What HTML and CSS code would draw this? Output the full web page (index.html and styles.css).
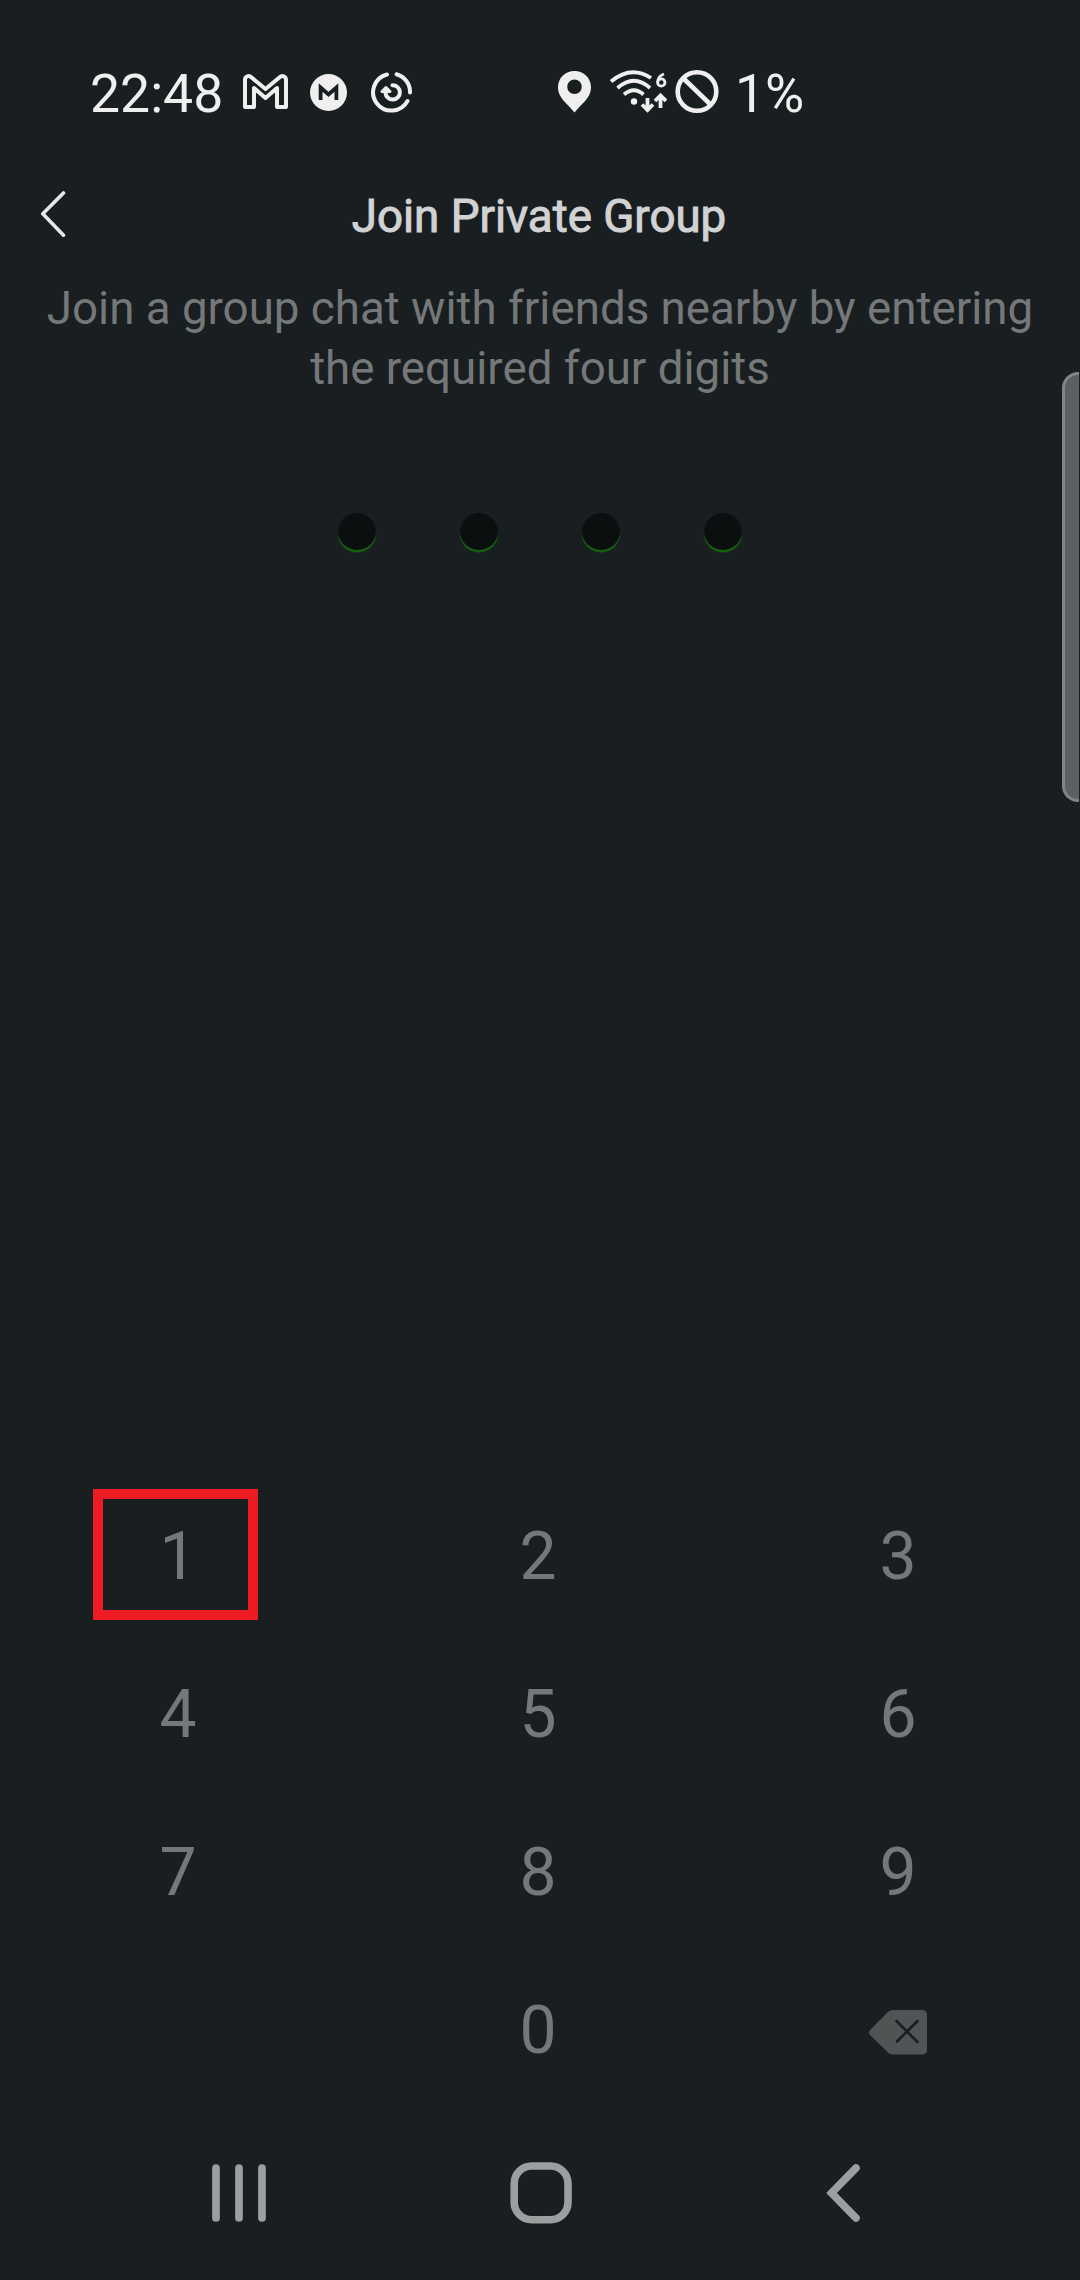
FILE: index.html
```html
<!DOCTYPE html>
<html lang="en">
<head>
<meta charset="utf-8">
<title>Join Private Group</title>
<link rel="stylesheet" href="styles.css">
</head>
<body>
<div class="screen">
  <div class="status">
    <span class="time">22:48</span>
    <svg class="gmail" width="49" height="68" viewBox="241 60 49 68" fill="none" stroke="#efefef" stroke-width="4" stroke-linejoin="round"><path d="M245 80C245 76 249 75 251 77L265.500 89L280 77C282 75 286 76 286 80V107H277V88L265.500 98L254 88V107H245Z"/></svg>
    <svg class="mega" width="37" height="68" viewBox="310 60 37 68"><circle cx="328.500" cy="92.500" r="18.500" fill="#efefef"/><path d="M320.600 100V87.500L328.500 94.500L336.400 87.500V100" fill="none" stroke="#191e20" stroke-width="3.800"/></svg>
    <svg class="sync" width="43" height="68" viewBox="370 60 43 68" fill="none" stroke="#efefef" stroke-width="4" stroke-linecap="round" stroke-linejoin="round"><path d="M387 74.500A18.300 18.300 0 1 0 407.500 101"/><path d="M396.500 74.300A18.300 18.300 0 0 1 410 92.500"/><path d="M392.500 85.200A7.200 7.200 0 1 1 385.500 93"/><path d="M382 91.500L386 87.500L390 91.500Z" stroke-width="3" fill="#efefef"/></svg>
    <svg class="pin" width="33" height="68" viewBox="558 60 33 68"><path fill="#efefef" fill-rule="evenodd" d="M574.500 71C565 71 558 78 558 87.500C558 98 567 103 574.500 112.500C582 103 591 98 591 87.500C591 78 584 71 574.500 71ZM574.500 79.500A7.200 7.200 0 1 1 574.500 94A7.200 7.200 0 1 1 574.500 79.500Z"/></svg>
    <svg class="wifi" width="58" height="68" viewBox="609 60 58 68" fill="none" stroke="#efefef" stroke-width="3.800"><path d="M611 81.500Q631 65 651 78"/><path d="M617.500 88Q634 73.500 650 88"/><path d="M624 94.500Q634 86 643.500 94.500"/><circle cx="634" cy="101.500" r="3.200" fill="#efefef" stroke="none"/><path d="M647.500 98V110M642 104.500L647.500 110L653 104.500M660.500 108V95.500M655 101L660.500 95.500L666 101"/><path d="M664 74Q658 76 657.700 82" stroke-width="2.800"/><circle cx="661.300" cy="82.500" r="3.700" stroke-width="2.800"/></svg>
    <svg class="block" width="44" height="68" viewBox="675 60 44 68" fill="none" stroke="#efefef" stroke-width="4.600"><circle cx="697" cy="91.500" r="19.300"/><path d="M683 78L711 105"/></svg>
    <span class="battery">1%</span>
  </div>
  <header class="header">
    <svg class="back" width="27" height="121" viewBox="39 156 27 121" fill="none" stroke="#e6e7e7" stroke-width="3.600" stroke-linecap="round" stroke-linejoin="round"><path d="M63.500 193L42.800 213.700L63.500 235.200"/></svg>
    <h1 class="title">Join Private Group</h1>
  </header>
  <p class="hint">Join a group chat with friends nearby by entering<br>the required four digits</p>
  <div class="dots"><i class="dot"></i><i class="dot"></i><i class="dot"></i><i class="dot"></i></div>
  <div class="keypad">
    <div class="key">1<span class="highlight"></span></div><div class="key">2</div><div class="key">3</div>
    <div class="key">4</div><div class="key">5</div><div class="key">6</div>
    <div class="key">7</div><div class="key">8</div><div class="key">9</div>
    <div class="key"></div><div class="key">0</div>
    <div class="key"><svg class="erase" width="58" height="45" viewBox="869 2009.500 58 45"><path fill="#505455" d="M893 2009.500H922Q927 2009.500 927 2014.500V2049Q927 2054 922 2054H893Q890 2054 888 2052L870 2034.500Q868 2032 870 2029.500L888 2011.500Q890 2009.500 893 2009.500Z"/><path d="M896.500 2020.500L917.500 2041.500M917.500 2020.500L897 2041" stroke="#191e20" stroke-width="2.600" stroke-linecap="round"/></svg></div>
  </div>
  <nav class="nav">
    <svg width="54" height="62" viewBox="212 2162 54 62" stroke="#9b9f9f" stroke-width="7.700" stroke-linecap="round"><path d="M216 2168V2218M239 2168V2218M262 2168V2218"/></svg>
    <svg class="home" width="62" height="62" viewBox="510 2162 62 62"><rect x="514.200" y="2166" width="53.800" height="53.800" rx="17.500" fill="none" stroke="#9b9f9f" stroke-width="7.600"/></svg>
    <svg class="return" width="36" height="62" viewBox="825 2162 36 62" fill="none" stroke="#9b9f9f" stroke-width="7.600" stroke-linecap="round"><path d="M856 2168L831.500 2193L856 2218"/></svg>
  </nav>
  <div class="edge-panel"></div>
</div>
</body>
</html>
```
FILE: styles.css
```css
* { box-sizing: border-box; }
body { margin: 0; background: #191e20; font-family: Roboto, sans-serif; }
svg { display: block; flex: none; }
.screen { position: relative; width: 1080px; height: 2280px; overflow: hidden; background: #191e20; }
.status { display: flex; height: 128px; padding: 60px 0 0 90px; color: #efefef; font-size: 53.500px; line-height: 68px; }
.time { width: 151px; }
.mega { margin-left: 20px; }
.sync { margin-left: 23px; }
.pin { margin-left: 145px; }
.wifi { margin-left: 18px; }
.block { margin-left: 8px; }
.battery { margin-left: 16px; }
.header { display: flex; height: 151px; padding: 28px 39px 0; }
.title { flex: 1; margin: 0 29px 0 0; text-align: center; color: #d1d2d3; font-size: 45.700px; font-weight: 400; -webkit-text-stroke: 1px #d1d2d3; line-height: 121px; white-space: nowrap; }
.hint { margin: 0; text-align: center; color: #747879; font-size: 45.700px; line-height: 60px; white-space: nowrap; }
.dots { display: flex; justify-content: center; gap: 84px; height: 1082px; padding-top: 114px; }
.dot { width: 38px; height: 37px; border-radius: 50%; background: #0b0f10; box-shadow: 0 2.500px 1px #14640f; }
.keypad { display: grid; grid-template-columns: repeat(3, 360px); grid-auto-rows: 158px; }
.key { position: relative; display: flex; align-items: center; justify-content: center; padding: 0 4px 9px 0; border-top: 1px solid #171c1e; color: #747879; font-size: 66px; }
.highlight { position: absolute; left: 93px; top: 7px; width: 165px; height: 131px; border: 10px solid #ed1c24; }
.erase { margin-top: 4px; }
.nav { display: flex; height: 167px; padding: 49px 0 0 212px; }
.home { margin-left: 244px; }
.return { margin-left: 253px; }
.edge-panel { position: absolute; right: 1px; top: 372px; width: 17px; height: 430px; border: 3.500px solid #828585; border-right: 0; border-radius: 16px 0 0 16px; background: #5c6060; }
```
